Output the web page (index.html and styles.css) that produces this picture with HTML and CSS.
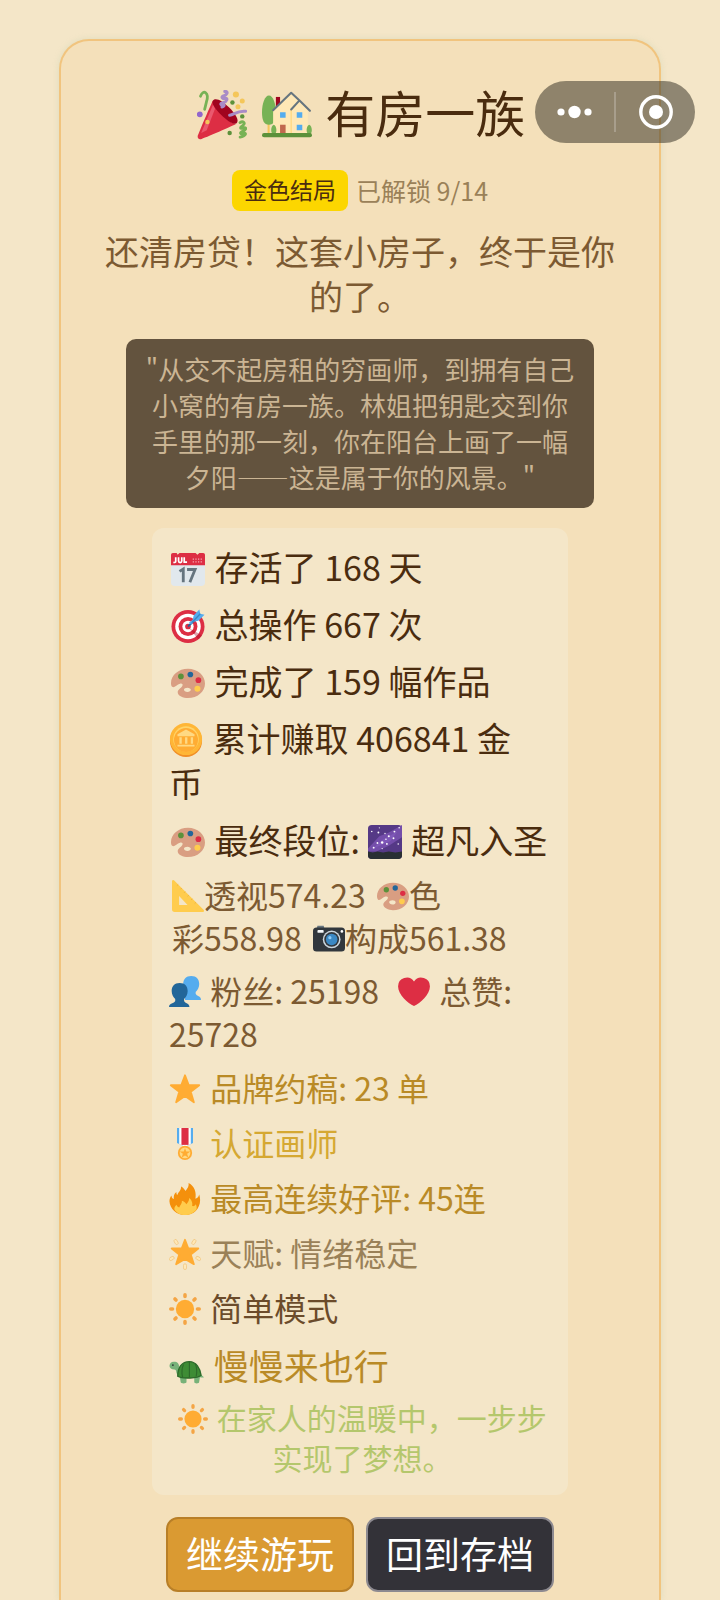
FILE: index.html
```html
<!DOCTYPE html>
<html lang="zh-CN">
<head>
<meta charset="utf-8">
<meta name="viewport" content="width=device-width, initial-scale=1">
<title>有房一族</title>
<link rel="stylesheet" href="styles.css">
</head>
<body>
<svg class="sprite" aria-hidden="true">
  <symbol id="palette" viewBox="0 0 36 36">
    <path fill="#D99E82" d="M18 3C8 3 0 9.700 0 18c0 1.600.3 3.400 1.300 4.100 2.200 1.500 4.900-2.500 8.200-3.400 2.400-.6 3.600.8 2.300 2.800-1.300 2.200-4.700 3.600-4.700 6.200C7.100 31.500 13 34 18 34c10 0 18-7 18-15.500S28 3 18 3zm-.600 24.500c-2.100 0-3.700-1.200-3.700-2.500s1.700-2.100 3.700-2.100 3.600 1 3.600 2.300-1.600 2.300-3.600 2.300z"/>
    <circle cx="10.500" cy="11" r="3" fill="#5C913B"/><circle cx="20.500" cy="9" r="3" fill="#226699"/>
    <circle cx="29" cy="15" r="3" fill="#DD2E44"/><circle cx="28" cy="24" r="3.200" fill="#FFCC4D"/>
  </symbol>
  <symbol id="sun" viewBox="0 0 36 36">
    <circle cx="18" cy="18" r="10.300" fill="#FFAC33"/>
    <g stroke="#F4A545" stroke-width="4" stroke-linecap="round"><path d="M18 2v2M18 32v2M2 18h2M32 18h2M6.700 6.700l1.200 1.200M28.100 28.100l1.200 1.200M6.700 29.300l1.200-1.200M28.100 7.900l1.200-1.200"/></g>
  </symbol>
</svg>

<div class="capsule">
  <button class="capsule-button" type="button" aria-label="更多"><svg width="40" height="40" viewBox="0 0 40 40"><g fill="#fff"><circle cx="6" cy="20" r="3.600"/><circle cx="19.500" cy="20" r="6.200"/><circle cx="33" cy="20" r="3.600"/></g></svg></button>
  <button class="capsule-button" type="button" aria-label="关闭"><svg width="40" height="40" viewBox="0 0 40 40"><circle cx="20" cy="20" r="15.200" fill="none" stroke="#fff" stroke-width="3.400"/><circle cx="20" cy="20" r="7" fill="#fff"/></svg></button>
</div>

<main class="card">
  <h1 class="title">
    <svg class="emoji" viewBox="0 0 36 36"><path fill="#DD2E44" d="M11.600 7.300C10.500 9 1.200 31 .5 33.200c-.3 1.500.8 2.500 2.300 2.200 2.200-.6 24.200-10 25.800-11.300C25 26.300 9.400 9.500 11.600 7.300z"/><path fill="#EA596E" d="M11.600 10.500L3 31l4-2 6-15.500z"/><path fill="#A0041E" d="M11.500 7.500c2-2.500 7 .5 11.500 5s7.800 9.300 5.500 11.500c-2 1.500-7-2-11-6s-7.600-8.800-6-10.500z"/><path fill="none" stroke="#77B255" stroke-width="2" stroke-linecap="round" d="M2.500 4.500C4.500-1 9 2 6.800 8.500L5.500 14"/><path fill="none" stroke="#77B255" stroke-width="2" stroke-linecap="round" d="M31 23.500c2-1.500 4.500.2 2 2-2.500 1.300-2 3 .3 1.800 2.700-.8 2.300 1.700-.5 2.400-2.300 1-1.800 2.600 1 1.500 2-.6 1.500 2-2.800 2.700"/><path fill="none" stroke="#A98BC6" stroke-width="2.200" stroke-linecap="round" d="M20 1c3 0 1.500 2.800-1 3.300-2 .8-.5 2.300 1 1.700 2.700-.5 1.500 2.600-1.300 3.200-2.500.5-1.500 2 .2 1.600 1.200-.3.500 1.200-.9 1.400M23.500 18.200c3.500-.7 5.500-3.500 11.500-2.900"/><circle cx="2" cy="17.500" r="2.100" fill="#9266CC"/><g fill="#F4C65A"><circle cx="28" cy="3.200" r="2.200"/><circle cx="32.600" cy="8" r="1.800"/><circle cx="29.500" cy="12" r="1.800"/><circle cx="7.500" cy="23" r="1.600"/></g><g fill="#5C913B"><circle cx="25.500" cy="9" r="1.600"/><circle cx="32.600" cy="19" r="1.600"/><circle cx="23.500" cy="31" r="1.600"/></g></svg>
    <svg class="emoji" viewBox="0 0 36 36"><path fill="#A0041E" d="M10 5h3v7h-3z"/><path fill="#F4C65A" d="M4 24h1.500v8H4z"/><path fill="#77B255" d="M5 4c3 0 5 6 5 12s-1.500 9-5 9-5-3-5-9S2 4 5 4z"/><path fill="#FFE8B6" d="M8 15L21 2.500l7 6.500 5 5v18H8z"/><path fill="#FFD983" d="M20.500 14l1-1v19h-1z"/><path fill="none" stroke="#66757F" stroke-width="1.500" stroke-linecap="round" stroke-linejoin="round" d="M8 14.500L21 2l6 5.500L34.500 15M21 14l6-6.500"/><g fill="#55ACEE"><path d="M13 16h4v4h-4zM25 16h4v4h-4zM25 25h4v4h-4z"/></g><path fill="#C1694F" d="M13 25h4v7h-4z"/><g fill="#77B255"><path d="M8.500 25C11 26 11 32 8.500 32S6 26 8.500 25zM34 25c2.500 1 2.500 7 0 7s-2.500-6 0-7z"/></g><path fill="#5C913B" d="M1.500 31h33a1.500 1.500 0 010 3h-33a1.500 1.500 0 010-3z"/></svg>
    有房一族
  </h1>

  <div class="status">
    <span class="badge">金色结局</span>
    <span class="unlocked">已解锁 9/14</span>
  </div>

  <p class="summary">还清房贷！这套小房子，终于是你的了。</p>

  <blockquote class="story">"从交不起房租的穷画师，到拥有自己<br>小窝的有房一族。林姐把钥匙交到你<br>手里的那一刻，你在阳台上画了一幅<br>夕阳——这是属于你的风景。"</blockquote>

  <section class="stats">
    <ul class="rows rows-main">
      <li><svg class="emoji" viewBox="0 0 36 36"><path fill="#E1E8ED" d="M0 11h36v21a4 4 0 01-4 4H4a4 4 0 01-4-4z"/><path fill="#DD2E44" d="M0 3a2 2 0 012-2h4l1 2 2-2h17l2 2 2-2h4a2 2 0 012 2v11H0z"/><g fill="none" stroke="#fff" stroke-width="1.800"><path d="M5 5.500v4.300q0 1.700-2.500 1.200M8 5.500v4q0 1.700 1.700 1.700t1.700-1.700v-4M14 5.500v5.300h3"/></g><path stroke="#F5A9B3" stroke-width="1.400" stroke-dasharray="1.300 1.500" d="M23 7.500h11M23 10.500h11"/><path fill="none" stroke="#66757F" stroke-width="3" d="M9 20.500l4-2.500v14M17 18.500h8.500L20 32"/></svg> 存活了 168 天</li>
      <li><svg class="emoji" viewBox="0 0 36 36"><circle cx="18" cy="18.500" r="17.500" fill="#DD2E44"/><circle cx="18" cy="18.500" r="13.500" fill="#fff"/><circle cx="18" cy="18.500" r="10" fill="#DD2E44"/><circle cx="18" cy="18.500" r="6" fill="#fff"/><circle cx="18" cy="18.500" r="3" fill="#DD2E44"/><path fill="#A0041E" opacity=".35" d="M19 20l10 12 4-4z"/><path stroke="#269" stroke-width="2" d="M18 18.500L29 8"/><path fill="#55ACEE" d="M24 7l6-6.500 1 4.500 4.500 1L29 12.500l-5 1-3 3-2-2 4-3z"/><path stroke="#3B88C3" stroke-width="1.500" d="M22 14.500L31 5"/></svg> 总操作 667 次</li>
      <li><svg class="emoji"><use href="#palette"/></svg> 完成了 159 幅作品</li>
      <li><svg class="emoji emoji-flush" viewBox="0 0 36 36"><ellipse cx="18" cy="19" rx="17" ry="17" fill="#F18F26"/><circle cx="18" cy="17" r="17" fill="#FFB636"/><circle cx="18" cy="17" r="13.500" fill="#FFD469"/><circle cx="18" cy="18" r="12.700" fill="#FFAC33"/><g fill="#FFD983"><path d="M18 7l9 5v2H9v-2zM11 15h2.500v7H11zM17 15h2.500v7H17zM23 15h2.500v7H23zM9 23h18v2H9z"/></g></svg> 累计赚取 406841 金<br>币</li>
      <li><svg class="emoji"><use href="#palette"/></svg> 最终段位: <svg class="emoji emoji-flush" viewBox="0 0 36 36"><rect width="36" height="36" rx="4" fill="#553986"/><path fill="#744EAA" d="M0 25L12 12 22 8 36 0v13L22 22 9 28H0z"/><path fill="#7F58B8" d="M4 26L15 16 31 7 24 17 12 22z"/><path fill="#292F33" d="M0 28l5 1 5-1 6 1 6-1 7 1 7-1v4a4 4 0 01-4 4H4a4 4 0 01-4-4z"/><g fill="#fff"><circle cx="11" cy="8" r="1"/><circle cx="22" cy="12" r="1.100"/><circle cx="15" cy="18.500" r="1.300"/><circle cx="10" cy="19" r="1"/><circle cx="28" cy="7" r="1"/><circle cx="32" cy="20" r=".8"/><circle cx="4" cy="7" r=".8"/><circle cx="27" cy="14" r="1"/><circle cx="19" cy="15" r=".8"/><circle cx="6" cy="24" r="1"/><circle cx="20" cy="20" r="1"/><circle cx="33" cy="3" r=".8"/><circle cx="15" cy="25" r=".7"/><circle cx="12" cy="3" r=".6"/><circle cx="18" cy="9" r=".7"/></g></svg> 超凡入圣</li>
    </ul>

    <ul class="rows rows-detail">
      <li class="skills"><svg class="emoji emoji-tight" viewBox="0 0 36 36"><path fill="#FFCC4D" fill-rule="evenodd" d="M0 1.500C0 0 1.500-.5 2.500.5l33 33c1 1 .5 2.500-1 2.500H3a3 3 0 01-3-3zM8 18v10h9.500z"/><path stroke="#E6AA3C" stroke-width=".8" d="M7 5l-1.500 1.500M11 9l-1.500 1.500M15 13l-1.500 1.500M19 17l-1.500 1.500M23 21l-1.500 1.500M27 25l-1.500 1.500"/></svg>透视574.23 <svg class="emoji emoji-inline"><use href="#palette"/></svg>色<br>彩558.98 <svg class="emoji emoji-inline" viewBox="0 0 36 36"><path fill="#66757F" d="M5 3h7l1 4H4z"/><rect y="5" width="36" height="27" rx="4" fill="#31373D"/><rect x="5" y="8" width="7" height="3" rx="1" fill="#F5F8FA"/><circle cx="21" cy="18.500" r="10" fill="#CCD6DD"/><circle cx="21" cy="18.500" r="8.300" fill="#31373D"/><circle cx="21" cy="18.500" r="6.500" fill="#3B88C3"/><circle cx="19" cy="16.500" r="1.800" fill="#8CCAF7"/><circle cx="32.500" cy="9.500" r="1.500" fill="#fff"/></svg>构成561.38</li>
      <li><svg class="emoji emoji-flush" viewBox="0 0 36 36"><path fill="#55ACEE" d="M25 0c6 0 9 4 9 9 0 4-2 7-4 9v2c1 3 6 2 6 7H18V16l-2-7c0-5 3-9 9-9z"/><path fill="#269" d="M12 8c6 0 9 4 9 9 0 4-2 7-4 9v2c1 3 6 2 6 7H0c0-5 6-4 7-7v-2c-2-2-4-5-4-9 0-5 3-9 9-9z"/></svg> 粉丝: 25198 <svg class="emoji emoji-spaced" viewBox="0 0 36 36"><path fill="#DD2E44" d="M35.900 11.800A9.800 9.800 0 0018 6.100 9.800 9.800 0 00.1 11.800C.1 21 11 30.500 18 33.800c7-3.300 17.900-12.800 17.900-22z"/></svg> 总赞:<br>25728</li>
    </ul>

    <ul class="rows rows-honors">
      <li class="gold"><svg class="emoji emoji-flush" viewBox="0 0 36 36"><path fill="#FFAC33" stroke="#FFAC33" stroke-width="2" stroke-linejoin="round" d="M18 2.500l4.200 11.200H34l-9.500 7.500L28 33l-10-7-10 7 3.500-11.800L2 13.700h11.800z"/></svg> 品牌约稿: 23 单</li>
      <li class="amber"><svg class="emoji emoji-flush" viewBox="0 0 36 36"><path fill="#55ACEE" d="M9 0h18v17l-9 4-9-4z"/><path fill="#fff" d="M11.500 0h13v18l-6.500 3-6.500-3z"/><path fill="#DD2E44" d="M14 0h8v19h-8z"/><circle cx="18" cy="28" r="8" fill="#FFAC33"/><circle cx="18" cy="28" r="6" fill="#FFD983"/><path fill="#FFAC33" d="M18 22.500l1.400 4H24l-3.600 2.600 1.300 4.200L18 30.800l-3.700 2.500 1.300-4.200-3.600-2.600h4.600z"/></svg> 认证画师</li>
      <li class="gold"><svg class="emoji emoji-flush" viewBox="0 0 36 36"><path fill="#F4900C" d="M35 19c0-2.100-.4-4-1-6-.7 3.300-2.500 4.500-4.300 4.700C31 11 29 3.500 22 0c.6 4.500-1.500 6-3.300 9C17 6.500 15 4.500 13.500 4c.5 4-2.400 5.500-4.200 9.500-.7-.6-1-1.800-1-3.500C5.500 12 5 15 5.500 18c-2-.4-2.600-2-2.700-4C1.300 16 .5 18 .5 20.500 1 29 8.500 36 18 36s17-7 17-17z"/><path fill="#FFCC4D" d="M30 24c-1 2-2.500 2.500-4 2 1-3-.5-7-3.500-9 .5 3-1.500 5.500-3 7-1-2-3-3.500-5-4 .5 3-2 5-3 7.500-1.700-.2-2.500-1.500-3-3-1.700 1.500-2.500 3-2.500 5C8.500 34 13 36 18 36s10-2 13-6.500c.5-2-.1-4-1-5.500z"/></svg> 最高连续好评: 45连</li>
      <li class="faded"><svg class="emoji emoji-flush" viewBox="0 0 36 36"><g fill="#FFE8B6" stroke="#F0C47C" stroke-width=".8"><rect x="16.300" y="29" width="3.400" height="6.500" rx="1.700"/><rect x="-1.700" y="-3" width="3.400" height="6" rx="1.700" transform="translate(8 4.500) rotate(-30)"/><rect x="-1.700" y="-3" width="3.400" height="6" rx="1.700" transform="translate(28 4.500) rotate(30)"/><rect x="-1.700" y="-3" width="3.400" height="6" rx="1.700" transform="translate(3 23) rotate(60)"/><rect x="-1.700" y="-3" width="3.400" height="6" rx="1.700" transform="translate(33 23) rotate(-60)"/></g><path fill="#FFAC33" stroke="#FFAC33" stroke-width="2" stroke-linejoin="round" d="M18 2l3.800 9.800H33l-8.500 6.900L28 29.500 18 23.500 8 29.500l3.500-10.800L3 11.800h11.200z"/></svg> 天赋: 情绪稳定</li>
      <li class="mode"><svg class="emoji emoji-flush"><use href="#sun"/></svg> 简单模式</li>
    </ul>

    <p class="achievement"><svg class="emoji emoji-flush" viewBox="0 0 36 36"><g fill="#77B279"><path d="M11 27h7v6c0 2-6 2-6 0zM26 27h6l-1 6c0 2-5 2-5 0zM30 23l6 5c-2 1-5 0-7-2z"/><path d="M5 12c4 0 5 2 5.500 5l2 7-3 2c-3-2-1-6-4-6-3 0-5-1.500-5-3.500C.5 14 2 12 5 12z"/></g><circle cx="4" cy="15.500" r=".9" fill="#292F33"/><path fill="#3E8C35" stroke="#2D6A2A" stroke-width="1.400" d="M9 27c0-9 4-15 12-15 7 0 11 7 12 14-3 3-19 4-24 1z"/><path fill="none" stroke="#2D6A2A" stroke-width="1.200" d="M15 15c-2 4-2 9-1 13M21 12v16M27 14c2 5 2 8 1 13"/></svg> 慢慢来也行</p>
    <p class="ending"><svg class="emoji emoji-flush"><use href="#sun"/></svg> 在家人的温暖中，一步步<br>实现了梦想。</p>
  </section>

  <div class="actions">
    <button class="action action-primary" type="button">继续游玩</button>
    <button class="action action-secondary" type="button">回到存档</button>
  </div>
</main>
</body>
</html>
```
FILE: styles.css
```css
* {
  box-sizing: border-box;
}

body {
  margin: 0;
  height: 100vh;
  overflow: hidden;
  padding: 39px 59px 0;
  background: #f4e6c8;
  color: #4a2c0f;
  font-family: "Noto Sans CJK SC", sans-serif;
}

h1, p, ul, blockquote {
  margin: 0;
  padding: 0;
  font-weight: 400;
}

.sprite {
  position: absolute;
  width: 0;
  height: 0;
}

.emoji {
  width: 1em;
  height: 1em;
  margin: 0 2px;
  vertical-align: -0.14em;
}

.emoji-flush {
  margin: 0 2px 0 0;
}

.emoji-tight {
  margin: 0;
}

.emoji-inline {
  margin: 0 0 0 4px;
}

.emoji-spaced {
  margin: 0 2px 0 12px;
}

/* Floating mini-program menu */
.capsule {
  position: fixed;
  top: 81px;
  right: 25px;
  display: flex;
  align-items: center;
  width: 160px;
  height: 62px;
  border-radius: 31px;
  background: rgba(50, 46, 34, 0.52);
}

.capsule-button {
  display: flex;
  flex: 1;
  justify-content: center;
  padding: 0;
  border: 0;
  background: none;
}

.capsule-button + .capsule-button {
  border-left: 2px solid rgba(255, 255, 255, 0.22);
}

.card {
  display: flex;
  flex-direction: column;
  align-items: center;
  min-height: 100%;
  padding: 35px 40px 0;
  border: 2px solid #f1c47e;
  border-bottom: 0;
  border-radius: 30px 30px 0 0;
  background: #f4e0ba;
  box-shadow: 0 0 6px rgba(190, 205, 170, 0.4);
}

.title {
  font-size: 50px;
  line-height: 70px;
  white-space: nowrap;
}

.status {
  display: flex;
  align-items: center;
  gap: 8px;
  margin-top: 24px;
}

.badge {
  padding: 1px 12px 4px;
  border-radius: 8px;
  background: #fcd600;
  font-size: 23px;
  line-height: 36px;
}

.unlocked {
  padding-bottom: 2px;
  color: #9a8158;
  font-size: 25px;
  line-height: 36px;
}

.summary {
  max-width: 520px;
  margin-top: 17px;
  color: #7c5a32;
  font-size: 34px;
  line-height: 45px;
  text-align: center;
}

.story {
  margin-top: 21px;
  padding: 12px 20px 13px;
  border-radius: 10px;
  background: #63533e;
  color: #cbb594;
  font-size: 26px;
  line-height: 36px;
  text-align: center;
}

.stats {
  width: 416px;
  max-width: 100%;
  margin-top: 20px;
  padding: 16px 12px 18px 17px;
  border-radius: 12px;
  background: #f4e6c8;
}

.rows {
  display: grid;
  list-style: none;
}

.rows-main {
  gap: 12px;
  font-size: 34px;
  line-height: 45px;
}

.rows-detail,
.rows-honors {
  color: #7c5a32;
  font-size: 32px;
  line-height: 43px;
}

.rows-detail {
  gap: 10px;
  margin-top: 11px;
}

.rows-honors {
  gap: 12px;
  margin-top: 11px;
}

.skills {
  padding-left: 3px;
}

.gold {
  color: #b98a26;
}

.amber {
  color: #d5a832;
}

.faded {
  color: #9a8158;
}

.mode {
  color: #6b4b2b;
}

.achievement {
  margin-top: 13px;
  color: #b98a26;
  font-size: 35px;
  line-height: 45px;
}

.ending {
  margin-top: 10px;
  color: #b4c76c;
  font-size: 30px;
  line-height: 40px;
  text-align: center;
}

.actions {
  display: flex;
  gap: 12px;
  margin-top: 22px;
}

.action {
  padding: 8px 18px 11px;
  border: 2px solid;
  border-radius: 12px;
  color: #fff;
  font-family: inherit;
  font-size: 37px;
  line-height: 52px;
}

.action-primary {
  border-color: #b87f28;
  background: #da9a32;
}

.action-secondary {
  border-color: #8d8a90;
  background: #333238;
}
```
